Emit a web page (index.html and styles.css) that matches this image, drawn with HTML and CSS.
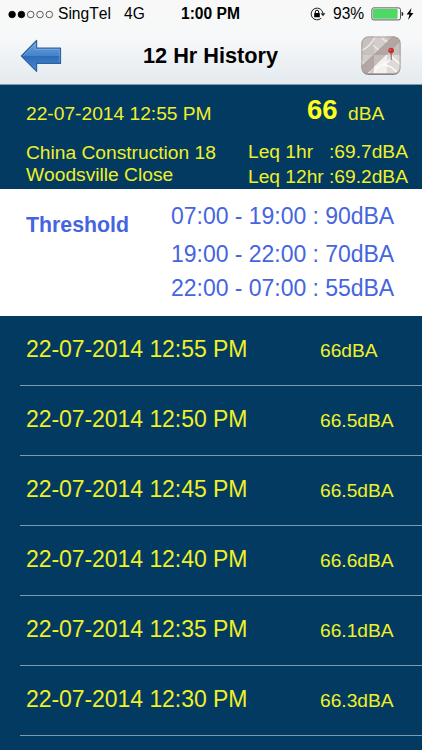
FILE: index.html
```html
<!DOCTYPE html>
<html lang="en">
<head>
  <meta charset="UTF-8" />
  <title>12 Hr History</title>
  <link rel="stylesheet" href="styles.css">
</head>
<body>

  <header>
    <div class="status">
      <svg class="signal" width="46" height="9" viewBox="0 0 46 9">
        <g stroke="#000" stroke-width="0.8">
          <circle cx="4.1" cy="4.5" r="3.3" />
          <circle cx="13.4" cy="4.5" r="3.3" />
          <g fill="none" stroke="#333">
            <circle cx="22.7" cy="4.5" r="3.3" />
            <circle cx="32" cy="4.5" r="3.3" />
            <circle cx="41.3" cy="4.5" r="3.3" />
          </g>
        </g>
      </svg>
      <span class="carrier">SingTel</span>
      <span class="network">4G</span>
      <span class="clock">1:00 PM</span>
      <svg class="lock" width="16" height="14" viewBox="0 0 16 14">
        <path d="M11.2 11.2A5.9 5.9 0 1 1 12.9 6.2" fill="none" stroke="#222" stroke-width="1" />
        <path d="M10.6 6.3h4.8L13 9.2z" fill="#222" />
        <rect x="4.2" y="6" width="5.6" height="4.3" rx="0.4" />
        <path d="M5.3 6.2V4.9a1.7 1.7 0 0 1 3.4 0v1.3" fill="none" stroke="#000" stroke-width="1" />
      </svg>
      <span class="percent">93%</span>
      <svg class="battery" width="45" height="14" viewBox="0 0 45 14">
        <rect x="0.9" y="0.9" width="28.6" height="12" rx="1.8" fill="#fff" stroke="#444" stroke-width="0.9" />
        <rect x="2" y="2" width="24.6" height="9.8" rx="0.8" fill="#4cd964" />
        <path d="M30.6 4.8q1.8 0.4 1.8 2.1t-1.8 2.1z" fill="#222" />
        <path d="M40.5 1L35.6 7.6h2.9L37 13l5.4-7h-3z" />
      </svg>
    </div>

    <div class="navbar">
      <svg class="back" width="42" height="34" viewBox="0 0 42 34">
        <defs>
          <linearGradient id="arrowFill" x1="0" y1="0" x2="0" y2="1">
            <stop offset="0" stop-color="#6da5df" />
            <stop offset="0.49" stop-color="#4583ca" />
            <stop offset="0.52" stop-color="#2d6bb8" />
            <stop offset="1" stop-color="#4b8cd2" />
          </linearGradient>
        </defs>
        <path d="M1.4 17L16.6 1.5V9.2H40.5V24.4H16.6V32.3z" fill="url(#arrowFill)" stroke="#2d629f" stroke-width="1.2" stroke-linejoin="round" />
        <path d="M3.5 16.7L15.4 4.5V10.4H39.3V23.2" fill="none" stroke="#8dbbe8" stroke-width="0.7" opacity="0.7" />
      </svg>
      <h1>12 Hr History</h1>
      <svg class="map" width="40" height="40" viewBox="0 0 40 40">
        <defs>
          <clipPath id="mapClip"><rect x="0.5" y="0.5" width="39" height="37" rx="6.5" /></clipPath>
        </defs>
        <rect x="0.5" y="1" width="39" height="38" rx="7" fill="#8b8685" />
        <g clip-path="url(#mapClip)">
          <rect width="40" height="38" fill="#d2cdca" />
          <path d="M0 0h13v19H0zM26 0h14v19H26z" fill="#c7c1be" />
          <path d="M13 19h13v19H13z" fill="#eeecea" />
          <path d="M26 19h14v19H26z" fill="#dedad8" />
          <g fill="none" stroke="#ebe7e4" stroke-width="1.6">
            <path d="M-1 15Q9 12 15-1M12 9L23 19M20-1Q23 8 32 5M0 24L9 38M5 30L15 22" />
            <path d="M13 38Q14 31 21 29T31 20M22 29Q31 29 37 38M31 21L40 29" stroke="#fbfaf9" />
          </g>
          <path d="M0 31L36-3H40V4L5 38H0z" fill="#b3a7a4" />
          <path d="M0 31L36-3M5 38L40 4" fill="none" stroke="#9c918e" stroke-width="0.6" />
          <path d="M13 19h13v19H13z" fill="#fff" opacity="0.25" />
        </g>
        <rect x="1" y="1" width="38" height="36.5" rx="6.5" fill="none" stroke="#a39d9b" stroke-width="0.8" />
        <path d="M30.2 17V24" stroke="#777" stroke-width="1.2" />
        <circle cx="30.2" cy="14.6" r="2.8" fill="#c5302d" />
        <circle cx="29.4" cy="13.8" r="0.8" fill="#e66d64" />
      </svg>
    </div>
  </header>

  <section class="summary">
    <div class="current">
      <span class="date">22-07-2014 12:55 PM</span>
      <span class="level">66</span>
      <span class="unit">dBA</span>
    </div>
    <div class="details">
      <div class="site">China Construction 18<br>Woodsville Close</div>
      <div class="leq">
        <span>Leq 1hr</span><span>:69.7dBA</span>
        <span>Leq 12hr</span><span>:69.2dBA</span>
      </div>
    </div>
  </section>

  <section class="threshold">
    <h2>Threshold</h2>
    <div class="limits">
      <div class="first">07:00 - 19:00 : 90dBA</div>
      <div>19:00 - 22:00 : 70dBA</div>
      <div>22:00 - 07:00 : 55dBA</div>
    </div>
  </section>

  <ul class="history">
    <li><span class="time">22-07-2014 12:55 PM</span><span class="value">66dBA</span></li>
    <li><span class="time">22-07-2014 12:50 PM</span><span class="value">66.5dBA</span></li>
    <li><span class="time">22-07-2014 12:45 PM</span><span class="value">66.5dBA</span></li>
    <li><span class="time">22-07-2014 12:40 PM</span><span class="value">66.6dBA</span></li>
    <li><span class="time">22-07-2014 12:35 PM</span><span class="value">66.1dBA</span></li>
    <li><span class="time">22-07-2014 12:30 PM</span><span class="value">66.3dBA</span></li>
  </ul>

</body>
</html>
```

FILE: styles.css
```css
* {
  box-sizing: border-box;
}

body {
  margin: 0;
  height: 750px;
  overflow: hidden;
  background: #033a61;
  color: #f0f028;
  font-family: 'Liberation Sans', Arial, sans-serif;
  font-size: 19.2px;
  font-kerning: none;
  white-space: nowrap;
}

header {
  height: 85px;
  background: linear-gradient(#f8f8f8, #f7f8f9 45%, #e4eaef);
  border-bottom: 1px solid #7e9cae;
  color: #000;
}

.status {
  display: flex;
  align-items: center;
  height: 28px;
  padding-left: 8px;
  font-size: 15.6px;
  line-height: 28px;
}

.carrier {
  width: 66px;
  padding-left: 4px;
}

.network {
  width: 57px;
  padding-left: 4px;
}

.clock {
  width: 133px;
  padding-left: 4px;
  font-weight: bold;
}

.percent {
  width: 38px;
  margin-left: 7px;
}

.navbar {
  display: flex;
  align-items: center;
  height: 55px;
  padding: 0 21px 0 20px;
}

h1 {
  margin: 0 auto 0 81px;
  font-size: 21.7px;
}

.summary {
  height: 104px;
  padding-left: 26px;
}

.current {
  display: flex;
  align-items: flex-start;
  height: 57px;
  line-height: 22px;
}

.date {
  width: 281px;
  padding-top: 18px;
}

.level {
  width: 41px;
  padding-top: 9px;
  font-size: 27.5px;
  font-weight: bold;
  line-height: 32px;
  color: #ffff1e;
}

.unit {
  padding-top: 18px;
}

.details {
  display: flex;
}

.site {
  width: 222px;
  line-height: 22px;
}

.leq {
  display: grid;
  grid-template-columns: 81px 80px;
  line-height: 25px;
  margin-top: -3px;
}

.threshold {
  display: flex;
  height: 127px;
  padding-left: 26px;
  background: #fff;
  color: #4565e0;
}

h2 {
  width: 145px;
  margin: 23px 0 0;
  font-size: 21.3px;
  line-height: 26px;
}

.limits {
  padding-top: 10px;
  font-size: 23px;
  line-height: 34px;
  letter-spacing: -0.03px;
}

.first {
  margin-bottom: 4px;
}

.history {
  margin: 0 0 0 20px;
  padding: 0;
  list-style: none;
}

.history li {
  display: flex;
  height: 70px;
  padding-left: 6px;
  border-bottom: 1px solid #8498ab;
  line-height: 66px;
}

.time {
  width: 294px;
  font-size: 23px;
  letter-spacing: -0.06px;
}

.value {
  padding-top: 2px;
}
```
